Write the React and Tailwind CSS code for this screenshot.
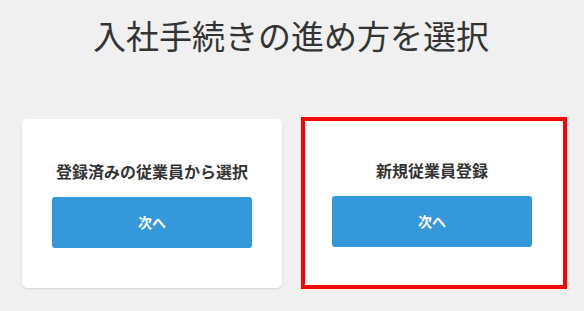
export default function App() {
  const font = { fontFamily: '"Noto Sans CJK JP", "Noto Sans", sans-serif' };
  return (
    <div className="w-[584px] h-[311px] bg-[#f0f0f0] overflow-hidden" style={font}>
      <div className="h-[69px] flex items-center justify-center">
        <h1 className="text-[33px] leading-[48px] font-normal text-[#333333] pr-[2px]">入社手続きの進め方を選択</h1>
      </div>
      <div className="mt-[48px] flex items-center pl-[22px] gap-[19px]">
        <div className="w-[260px] h-[169px] bg-white rounded-[5px] shadow-[0_1px_2px_rgba(0,0,0,0.12)] flex flex-col items-center pt-[40px]">
          <div className="text-[16px] leading-[24px] font-bold text-[#333333]">登録済みの従業員から選択</div>
          <button className="mt-[14px] w-[200px] h-[51px] rounded-[3px] bg-[#3498db] text-white text-[14px] font-bold">次へ</button>
        </div>
        <div className="w-[266px] h-[172px] bg-white border-4 border-[#ff0000] flex flex-col items-center pt-[37px] pr-[4px]">
          <div className="text-[16px] leading-[24px] font-bold text-[#333333]">新規従業員登録</div>
          <button className="mt-[14px] w-[200px] h-[51px] rounded-[3px] bg-[#3498db] text-white text-[14px] font-bold">次へ</button>
        </div>
      </div>
    </div>
  );
}
